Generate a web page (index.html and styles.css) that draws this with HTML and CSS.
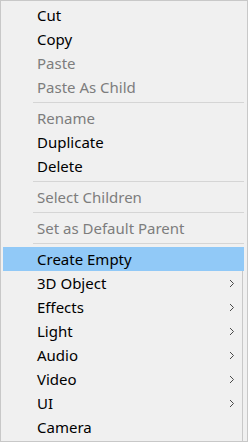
FILE: index.html
```html
<!DOCTYPE html>
<html lang="en">
  <head>
    <meta charset="UTF-8" />
    <title>Context Menu</title>
    <link rel="stylesheet" href="styles.css">
  </head>
  <body>
    <div class="menu">
      <div class="item">Cut</div>
      <div class="item">Copy</div>
      <div class="item disabled">Paste</div>
      <div class="item disabled">Paste As Child</div>
      <div class="sep"></div>
      <div class="item disabled">Rename</div>
      <div class="item">Duplicate</div>
      <div class="item">Delete</div>
      <div class="sep"></div>
      <div class="item disabled">Select Children</div>
      <div class="sep"></div>
      <div class="item disabled">Set as Default Parent</div>
      <div class="sep"></div>
      <div class="item active">Create Empty</div>

      <!-- Submenu entries -->
      <div class="group">
        <div class="item sub">3D Object <svg class="arrow" width="6" height="9" viewBox="0 0 6 9"><polyline points="1,1 4.5,4.5 1,8" /></svg></div>
        <div class="item sub">Effects <svg class="arrow" width="6" height="9" viewBox="0 0 6 9"><polyline points="1,1 4.5,4.5 1,8" /></svg></div>
        <div class="item sub">Light <svg class="arrow" width="6" height="9" viewBox="0 0 6 9"><polyline points="1,1 4.5,4.5 1,8" /></svg></div>
        <div class="item sub">Audio <svg class="arrow" width="6" height="9" viewBox="0 0 6 9"><polyline points="1,1 4.5,4.5 1,8" /></svg></div>
        <div class="item sub">Video <svg class="arrow" width="6" height="9" viewBox="0 0 6 9"><polyline points="1,1 4.5,4.5 1,8" /></svg></div>
        <div class="item sub">UI <svg class="arrow" width="6" height="9" viewBox="0 0 6 9"><polyline points="1,1 4.5,4.5 1,8" /></svg></div>
        <div class="item">Camera</div>
      </div>
    </div>
  </body>
</html>
```

FILE: styles.css
```css
* {
  margin: 0;
  padding: 0;
  box-sizing: border-box;
}

body {
  font-family: "Noto Sans", "Open Sans", sans-serif;
  background-color: #f0f0f0;
}

.menu {
  width: 248px;
  height: 442px;
  border: 1px solid #c8c8c8;
  background-color: #f0f0f0;
  padding: 2px 2px 0;
  overflow: hidden;
}

.item {
  display: flex;
  align-items: center;
  height: 24px;
  line-height: 24px;
  padding-left: 34px;
  padding-right: 7px;
  font-size: 15px;
  color: #000;
}

.item.disabled {
  color: #7d7d7d;
}

.item.active {
  background-color: #91c9f7;
  margin-right: 1px;
}

.item.sub {
  justify-content: space-between;
}

.arrow {
  fill: none;
  stroke: #4a4a4a;
  stroke-width: 1;
}

.sep {
  height: 7px;
  padding-top: 3px;
  margin-left: 30px;
  margin-right: 1px;
}

.sep::before {
  content: "";
  display: block;
  border-top: 1px solid #d5d5d5;
}

.group {
  margin-right: 2px;
  padding-bottom: 2px;
  border-right: 1px solid #c8c8c8;
}
```
